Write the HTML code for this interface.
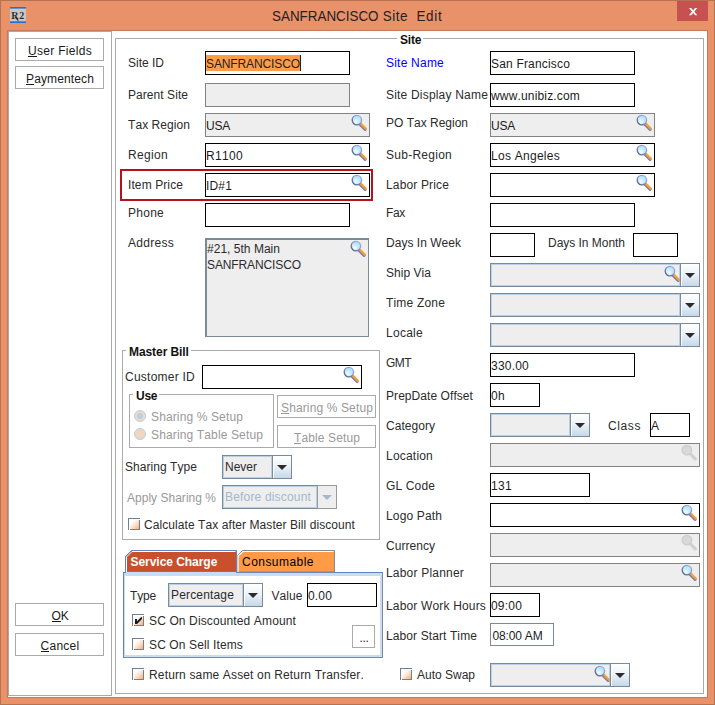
<!DOCTYPE html>
<html><head><meta charset="utf-8"><title>SANFRANCISCO Site Edit</title>
<style>
html,body{margin:0;padding:0;background:#e99168;}
body{width:715px;height:705px;position:relative;overflow:hidden;font-family:"Liberation Sans",sans-serif;font-size:12px;}
.a{position:absolute;}
.t{position:absolute;white-space:pre;font-size:12px;font-kerning:none;}
.fb{border:1px solid #000;background:#fff;box-sizing:border-box;}
.fd{border:1px solid #828282;background:#eee;box-sizing:border-box;}
.fl{border:1px solid #7a8a99;background:#fff;box-sizing:border-box;}
.cb{border:1px solid #7a8a99;background:#eee;box-sizing:border-box;box-shadow:inset 0 0 0 1px #b8cfe5;}
.cbtn{border:1px solid #7a8a99;box-sizing:border-box;background:linear-gradient(#ffffff 0%,#f0f5fa 40%,#c5d8ea 100%);box-shadow:inset 1px 1px 0 #fff;}
.cdis{background:#eee;border-color:#999;box-shadow:none;}
.btn{border:1px solid #aaa;background:#fff;box-sizing:border-box;}
.ck{width:12px;height:12px;box-sizing:border-box;border:1px solid #74859a;background:linear-gradient(135deg,#ffffff 30%,#f9d6ba 68%,#f3ab7a 100%);box-shadow:inset 1px 1px 0 #fff;}
.rd{width:12px;height:12px;border-radius:50%;box-sizing:border-box;border:1px solid #b8cfe5;}
</style></head>
<body>
<svg width="0" height="0" style="position:absolute"><defs><radialGradient id="lg" cx="0.38" cy="0.68" r="0.8"><stop offset="0" stop-color="#f4fcff"/><stop offset="0.45" stop-color="#c2ebff"/><stop offset="1" stop-color="#a9dcfb"/></radialGradient><linearGradient id="rg" x1="0" y1="1" x2="1" y2="0"><stop offset="0" stop-color="#4f567b"/><stop offset="0.5" stop-color="#828abc"/><stop offset="1" stop-color="#aeb6e2"/></linearGradient><linearGradient id="cg" x1="0" y1="0" x2="1" y2="1"><stop offset="0.22" stop-color="#ffffff"/><stop offset="0.6" stop-color="#fbdcc4"/><stop offset="1" stop-color="#f6ad7a"/></linearGradient></defs></svg>
<div class="a" style="left:0;top:0;width:715px;height:705px;background:#e99168;box-sizing:border-box;border:1px solid #b5734f"></div>
<div class="a" style="left:7px;top:30px;width:701px;height:668px;background:#c47a58"></div>
<div class="a" style="left:8px;top:31px;width:699px;height:666px;background:#fff"></div>
<svg class="a" style="left:10px;top:7px" width="16" height="16" viewBox="0 0 16 16"><rect x="0" y="0" width="16" height="16" fill="#c6c8cc"/><rect x="0" y="0" width="16" height="1.6" fill="#2a6fc6"/><rect x="0" y="14.3" width="16" height="1.7" fill="#2a6fc6"/><text x="1.2" y="11.9" font-family="Liberation Serif, serif" font-size="10" font-weight="bold" letter-spacing="0.9" fill="#1a1a1a" fill-opacity="0.92">R2</text><path d="M5.2 10 L8.3 13.7" stroke="#222" stroke-width="1.1" fill="none"/></svg>
<div class="a" id="title" style="left:271.6px;top:4px;height:24px;line-height:24px;font-size:15px;color:#222;white-space:pre;font-kerning:none;transform-origin:0 50%;transform:scaleX(0.894);word-spacing:0.6px">SANFRANCISCO <span style="letter-spacing:0.56px">Site</span>  <span style="letter-spacing:0.78px">Edit</span></div>
<div class="a" style="left:677px;top:1px;width:31px;height:20px;background:#c75050"></div>
<svg class="a" style="left:689px;top:8px" width="9" height="8" viewBox="0 0 9 8"><path d="M0 0H2.2L8.3 7.2H6.1Z" fill="#fff"/><path d="M6.1 0H8.3L2.2 7.2H0Z" fill="#fff"/></svg>
<div class="a" style="left:8px;top:31px;width:104px;height:665px;border:1px solid #aaa;box-sizing:border-box"></div>
<div class="a btn" style="left:15px;top:38px;width:89px;height:23px"></div>
<div class="t" style="left:28.0px;top:42.5px;height:16px;line-height:16px;color:#1a1a1a;letter-spacing:0.302px;">User Fields</div>
<div class="a" style="left:28.0px;top:56px;width:8.97px;height:1px;background:#1a1a1a"></div>
<div class="a btn" style="left:15px;top:66px;width:89px;height:23px"></div>
<div class="t" style="left:26.0px;top:70.5px;height:16px;line-height:16px;color:#1a1a1a;letter-spacing:0.13px;">Paymentech</div>
<div class="a" style="left:26.0px;top:84px;width:8.13px;height:1px;background:#1a1a1a"></div>
<div class="a btn" style="left:15px;top:603px;width:89px;height:23px"></div>
<div class="t" style="left:51.5px;top:607.5px;height:16px;line-height:16px;color:#1a1a1a;letter-spacing:-0.169px;">OK</div>
<div class="a" style="left:51.5px;top:621px;width:9.16px;height:1px;background:#1a1a1a"></div>
<div class="a btn" style="left:15px;top:633px;width:89px;height:23px"></div>
<div class="t" style="left:40.5px;top:637.5px;height:16px;line-height:16px;color:#1a1a1a;letter-spacing:0.274px;">Cancel</div>
<div class="a" style="left:40.5px;top:651px;width:8.94px;height:1px;background:#1a1a1a"></div>
<div class="a" style="left:115px;top:38px;width:589px;height:656px;border:1px solid #aaaaaa;box-sizing:border-box"></div>
<div class="a" style="left:397px;top:38px;width:26px;height:1px;background:#fff"></div>
<div class="t" style="left:400px;top:32.0px;height:16px;line-height:16px;color:#111;letter-spacing:-0.2px;font-weight:bold;">Site</div>
<div class="t" style="left:128px;top:55.0px;height:16px;line-height:16px;color:#2b2b2b;letter-spacing:-0.002px;">Site ID</div>
<div class="a fb" style="left:205px;top:51px;width:145px;height:24px"></div>
<div class="a" style="left:206px;top:55px;width:94px;height:16px;background:#ff9c4a"></div>
<div class="a" style="left:300px;top:55px;width:1px;height:16px;background:#222"></div>
<div class="t" style="left:206px;top:56.0px;height:16px;line-height:16px;color:#222;letter-spacing:-0.112px;">SANFRANCISCO</div>
<div class="t" style="left:128px;top:87.0px;height:16px;line-height:16px;color:#2b2b2b;letter-spacing:0.058px;">Parent Site</div>
<div class="a fd" style="left:205px;top:83px;width:145px;height:24px"></div>
<div class="t" style="left:128px;top:117.0px;height:16px;line-height:16px;color:#2b2b2b;letter-spacing:0.063px;">Tax Region</div>
<div class="a fd" style="left:205px;top:113px;width:165px;height:24px"></div>
<div class="t" style="left:206px;top:118.0px;height:16px;line-height:16px;color:#1c1c1c;letter-spacing:-0.225px;">USA</div>
<svg class="a" style="left:350px;top:114px" width="17" height="17" viewBox="0 0 17 17"><line x1="10.3" y1="10.7" x2="15.1" y2="15.5" stroke="#797cb6" stroke-width="3" stroke-linecap="round"/><line x1="11.3" y1="10.1" x2="15.9" y2="14.7" stroke="#f8a12f" stroke-width="2.3" stroke-linecap="round"/><circle cx="6.9" cy="6.1" r="4.7" fill="url(#lg)" stroke="url(#rg)" stroke-width="1.3"/></svg>
<div class="t" style="left:128px;top:147.0px;height:16px;line-height:16px;color:#2b2b2b;letter-spacing:0.329px;">Region</div>
<div class="a fb" style="left:205px;top:143px;width:165px;height:24px"></div>
<div class="t" style="left:206px;top:148.0px;height:16px;line-height:16px;color:#1c1c1c;letter-spacing:0.328px;">R1100</div>
<svg class="a" style="left:350px;top:144px" width="17" height="17" viewBox="0 0 17 17"><line x1="10.3" y1="10.7" x2="15.1" y2="15.5" stroke="#797cb6" stroke-width="3" stroke-linecap="round"/><line x1="11.3" y1="10.1" x2="15.9" y2="14.7" stroke="#f8a12f" stroke-width="2.3" stroke-linecap="round"/><circle cx="6.9" cy="6.1" r="4.7" fill="url(#lg)" stroke="url(#rg)" stroke-width="1.3"/></svg>
<div class="a" style="left:120px;top:169px;width:253px;height:32px;border:2px solid #b5121b;box-sizing:border-box"></div>
<div class="t" style="left:128px;top:177.0px;height:16px;line-height:16px;color:#2b2b2b;letter-spacing:0.099px;">Item Price</div>
<div class="a fb" style="left:205px;top:173px;width:165px;height:24px"></div>
<div class="t" style="left:206px;top:178.0px;height:16px;line-height:16px;color:#1c1c1c;letter-spacing:0.163px;">ID#1</div>
<svg class="a" style="left:350px;top:174px" width="17" height="17" viewBox="0 0 17 17"><line x1="10.3" y1="10.7" x2="15.1" y2="15.5" stroke="#797cb6" stroke-width="3" stroke-linecap="round"/><line x1="11.3" y1="10.1" x2="15.9" y2="14.7" stroke="#f8a12f" stroke-width="2.3" stroke-linecap="round"/><circle cx="6.9" cy="6.1" r="4.7" fill="url(#lg)" stroke="url(#rg)" stroke-width="1.3"/></svg>
<div class="t" style="left:128px;top:205.0px;height:16px;line-height:16px;color:#2b2b2b;letter-spacing:0.26px;">Phone</div>
<div class="a fb" style="left:205px;top:203px;width:145px;height:24px"></div>
<div class="t" style="left:128px;top:235.0px;height:16px;line-height:16px;color:#2b2b2b;letter-spacing:0.283px;">Address</div>
<div class="a" style="left:205px;top:238px;width:164px;height:99px;background:#eee;border:1px solid #7a8a99;border-left-width:2px;border-top-width:2px;box-sizing:border-box"></div>
<div class="t" style="left:207px;top:241.0px;height:16px;line-height:16px;color:#2b2b2b;letter-spacing:0.022px;">#21, 5th Main</div>
<div class="t" style="left:207px;top:257.0px;height:16px;line-height:16px;color:#2b2b2b;letter-spacing:-0.112px;">SANFRANCISCO</div>
<svg class="a" style="left:349px;top:240px" width="17" height="17" viewBox="0 0 17 17"><line x1="10.3" y1="10.7" x2="15.1" y2="15.5" stroke="#797cb6" stroke-width="3" stroke-linecap="round"/><line x1="11.3" y1="10.1" x2="15.9" y2="14.7" stroke="#f8a12f" stroke-width="2.3" stroke-linecap="round"/><circle cx="6.9" cy="6.1" r="4.7" fill="url(#lg)" stroke="url(#rg)" stroke-width="1.3"/></svg>
<div class="a" style="left:122px;top:350px;width:258px;height:190px;border:1px solid #aaaaaa;box-sizing:border-box"></div>
<div class="a" style="left:126px;top:350px;width:65px;height:1px;background:#fff"></div>
<div class="t" style="left:129px;top:344.0px;height:16px;line-height:16px;color:#111;letter-spacing:-0.073px;font-weight:bold;">Master Bill</div>
<div class="t" style="left:125px;top:369.0px;height:16px;line-height:16px;color:#2b2b2b;letter-spacing:0.241px;">Customer ID</div>
<div class="a fb" style="left:202px;top:365px;width:160px;height:24px"></div>
<svg class="a" style="left:342px;top:366px" width="17" height="17" viewBox="0 0 17 17"><line x1="10.3" y1="10.7" x2="15.1" y2="15.5" stroke="#797cb6" stroke-width="3" stroke-linecap="round"/><line x1="11.3" y1="10.1" x2="15.9" y2="14.7" stroke="#f8a12f" stroke-width="2.3" stroke-linecap="round"/><circle cx="6.9" cy="6.1" r="4.7" fill="url(#lg)" stroke="url(#rg)" stroke-width="1.3"/></svg>
<div class="a" style="left:129px;top:394px;width:145px;height:54px;border:1px solid #aaaaaa;box-sizing:border-box"></div>
<div class="a" style="left:133px;top:394px;width:26px;height:1px;background:#fff"></div>
<div class="t" style="left:136px;top:388.0px;height:16px;line-height:16px;color:#111;letter-spacing:-0.267px;font-weight:bold;">Use</div>
<div class="a rd" style="left:134px;top:410px;background:radial-gradient(circle,#b8cfe5 0,#b8cfe5 2.8px,#f3d7c3 3.4px)"></div>
<div class="a rd" style="left:134px;top:428px;background:#f0d5c0"></div>
<div class="t" style="left:151px;top:409.0px;height:16px;line-height:16px;color:#999999;letter-spacing:0.129px;">Sharing % Setup</div>
<div class="t" style="left:151px;top:427.0px;height:16px;line-height:16px;color:#999999;letter-spacing:0.137px;">Sharing Table Setup</div>
<div class="a btn" style="left:277px;top:395px;width:99px;height:23px"></div>
<div class="t" style="left:281.0px;top:399.5px;height:16px;line-height:16px;color:#999999;letter-spacing:0.129px;">Sharing % Setup</div>
<div class="a" style="left:281.0px;top:413px;width:8.13px;height:1px;background:#999999"></div>
<div class="a btn" style="left:277px;top:425px;width:99px;height:23px"></div>
<div class="t" style="left:294.0px;top:429.5px;height:16px;line-height:16px;color:#999999;letter-spacing:0.117px;">Table Setup</div>
<div class="a" style="left:294.0px;top:443px;width:7.45px;height:1px;background:#999999"></div>
<div class="t" style="left:125px;top:459.0px;height:16px;line-height:16px;color:#2b2b2b;letter-spacing:0.052px;">Sharing Type</div>
<div class="a cb" style="left:222px;top:455px;width:51px;height:24px"></div>
<div class="a cbtn" style="left:272px;top:455px;width:20px;height:24px"><svg width="10" height="5" viewBox="0 0 10 5" style="position:absolute;left:4px;top:9px"><path d="M0 0H10L5 5Z" fill="#2b2b2b"/></svg></div>
<div class="t" style="left:225px;top:459.0px;height:16px;line-height:16px;color:#2b2b2b;letter-spacing:-0.002px;">Never</div>
<div class="t" style="left:127px;top:490.0px;height:16px;line-height:16px;color:#999999;letter-spacing:0.019px;">Apply Sharing %</div>
<div class="a cb" style="left:222px;top:485px;width:96px;height:24px"></div>
<div class="a cbtn cdis" style="left:317px;top:485px;width:20px;height:24px"><svg width="10" height="5" viewBox="0 0 10 5" style="position:absolute;left:4px;top:9px"><path d="M0 0H10L5 5Z" fill="#a3b8cc"/></svg></div>
<div class="t" style="left:225px;top:489.0px;height:16px;line-height:16px;color:#a3b8cc;letter-spacing:0.174px;">Before discount</div>
<svg class="a" style="left:128px;top:518px" width="12" height="12" viewBox="0 0 12 12"><g shape-rendering="crispEdges"><rect x="0" y="0" width="12" height="12" fill="#fff"/><rect x="2" y="2" width="9" height="9" fill="url(#cg)"/><path d="M0 0.5H12M0.5 0V12M11.5 2V12M2 11.5H12" stroke="#6f8197" stroke-width="1" fill="none"/></g></svg>
<div class="t" style="left:144px;top:517.0px;height:16px;line-height:16px;color:#2b2b2b;letter-spacing:0.073px;">Calculate Tax after Master Bill discount</div>
<svg class="a" style="left:123px;top:550px" width="261" height="109" viewBox="0 0 261 109"><rect x="0" y="22" width="260" height="86" fill="#7a8a99"/><rect x="0" y="22" width="259" height="85" fill="#6382bf"/><rect x="1" y="23" width="258" height="84" fill="#c8ddf2"/><rect x="0" y="22" width="1" height="86" fill="#6382bf"/><rect x="259" y="23" width="1" height="85" fill="#7a8a99"/><rect x="1" y="107" width="259" height="1" fill="#7a8a99"/><rect x="2" y="26" width="255" height="79" fill="#fff"/><path d="M114.5 22 V5.5 L119.5 0.5 H211.5 V22 Z" fill="#ff9a46" stroke="#7a8a99"/><path d="M115 22 V6 L120 1.5 H210.5" fill="none" stroke="#fff" stroke-width="1.2"/><path d="M2.5 23 V6.5 L8.5 0.5 H113.5 V22 H3 Z" fill="#c8502c" stroke="#6382bf"/><path d="M3.5 23 V7 L9 1.5 H112.5" fill="none" stroke="#fff"/><rect x="3" y="22" width="110" height="1.5" fill="#c8ddf2"/></svg>
<div class="t" style="left:130.5px;top:554.0px;height:16px;line-height:16px;color:#fff;letter-spacing:-0.043px;font-weight:bold;">Service Charge</div>
<div class="t" style="left:242px;top:554.0px;height:16px;line-height:16px;color:#000;letter-spacing:0.463px;">Consumable</div>
<div class="t" style="left:130px;top:588.0px;height:16px;line-height:16px;color:#2b2b2b;letter-spacing:-0.169px;">Type</div>
<div class="a cb" style="left:168px;top:583px;width:76px;height:24px"></div>
<div class="a cbtn" style="left:243px;top:583px;width:20px;height:24px"><svg width="10" height="5" viewBox="0 0 10 5" style="position:absolute;left:4px;top:9px"><path d="M0 0H10L5 5Z" fill="#2b2b2b"/></svg></div>
<div class="t" style="left:171px;top:587.0px;height:16px;line-height:16px;color:#2b2b2b;letter-spacing:0.162px;">Percentage</div>
<div class="t" style="left:271.5px;top:588.0px;height:16px;line-height:16px;color:#2b2b2b;letter-spacing:0.062px;">Value</div>
<div class="a fb" style="left:307px;top:583px;width:70px;height:24px"></div>
<div class="t" style="left:308px;top:588.0px;height:16px;line-height:16px;color:#1c1c1c;letter-spacing:0.161px;">0.00</div>
<svg class="a" style="left:132px;top:614px" width="12" height="12" viewBox="0 0 12 12"><g shape-rendering="crispEdges"><rect x="0" y="0" width="12" height="12" fill="#fff"/><rect x="2" y="2" width="9" height="9" fill="url(#cg)"/><path d="M0 0.5H12M0.5 0V12M11.5 2V12M2 11.5H12" stroke="#6f8197" stroke-width="1" fill="none"/></g><path d="M3 5H5V7.2L9 3.2H10V5L5.6 9.4L5 10H3Z" fill="#1a1a1a"/></svg>
<div class="t" style="left:149px;top:613.0px;height:16px;line-height:16px;color:#2b2b2b;letter-spacing:0.127px;">SC On Discounted Amount</div>
<svg class="a" style="left:132px;top:638px" width="12" height="12" viewBox="0 0 12 12"><g shape-rendering="crispEdges"><rect x="0" y="0" width="12" height="12" fill="#fff"/><rect x="2" y="2" width="9" height="9" fill="url(#cg)"/><path d="M0 0.5H12M0.5 0V12M11.5 2V12M2 11.5H12" stroke="#6f8197" stroke-width="1" fill="none"/></g></svg>
<div class="t" style="left:149px;top:637.0px;height:16px;line-height:16px;color:#2b2b2b;letter-spacing:0.123px;">SC On Sell Items</div>
<div class="a btn" style="left:352px;top:625px;width:23px;height:23px"></div>
<div class="t" style="left:359.5px;top:629.5px;height:16px;line-height:16px;color:#1a1a1a;letter-spacing:-0.334px;">...</div>
<svg class="a" style="left:132px;top:668px" width="12" height="12" viewBox="0 0 12 12"><g shape-rendering="crispEdges"><rect x="0" y="0" width="12" height="12" fill="#fff"/><rect x="2" y="2" width="9" height="9" fill="url(#cg)"/><path d="M0 0.5H12M0.5 0V12M11.5 2V12M2 11.5H12" stroke="#6f8197" stroke-width="1" fill="none"/></g></svg>
<div class="t" style="left:149px;top:667.0px;height:16px;line-height:16px;color:#2b2b2b;letter-spacing:0.151px;">Return same Asset on Return Transfer.</div>
<div class="t" style="left:386px;top:55.0px;height:16px;line-height:16px;color:#0000ff;letter-spacing:0.22px;">Site Name</div>
<div class="a fb" style="left:490px;top:51px;width:145px;height:24px"></div>
<div class="t" style="left:491px;top:56.0px;height:16px;line-height:16px;color:#1c1c1c;letter-spacing:0.177px;">San Francisco</div>
<div class="t" style="left:386px;top:87.0px;height:16px;line-height:16px;color:#2b2b2b;letter-spacing:0.194px;">Site Display Name</div>
<div class="a fb" style="left:490px;top:83px;width:145px;height:24px"></div>
<div class="t" style="left:491px;top:88.0px;height:16px;line-height:16px;color:#1c1c1c;letter-spacing:0.165px;">www.unibiz.com</div>
<div class="t" style="left:386px;top:115.0px;height:16px;line-height:16px;color:#2b2b2b;letter-spacing:-0.003px;">PO Tax Region</div>
<div class="a fd" style="left:490px;top:113px;width:165px;height:24px"></div>
<div class="t" style="left:491px;top:118.0px;height:16px;line-height:16px;color:#1c1c1c;letter-spacing:-0.225px;">USA</div>
<svg class="a" style="left:635px;top:114px" width="17" height="17" viewBox="0 0 17 17"><line x1="10.3" y1="10.7" x2="15.1" y2="15.5" stroke="#797cb6" stroke-width="3" stroke-linecap="round"/><line x1="11.3" y1="10.1" x2="15.9" y2="14.7" stroke="#f8a12f" stroke-width="2.3" stroke-linecap="round"/><circle cx="6.9" cy="6.1" r="4.7" fill="url(#lg)" stroke="url(#rg)" stroke-width="1.3"/></svg>
<div class="t" style="left:386px;top:147.0px;height:16px;line-height:16px;color:#2b2b2b;letter-spacing:0.263px;">Sub-Region</div>
<div class="a fb" style="left:490px;top:143px;width:165px;height:24px"></div>
<div class="t" style="left:491px;top:148.0px;height:16px;line-height:16px;color:#1c1c1c;letter-spacing:0.268px;">Los Angeles</div>
<svg class="a" style="left:635px;top:144px" width="17" height="17" viewBox="0 0 17 17"><line x1="10.3" y1="10.7" x2="15.1" y2="15.5" stroke="#797cb6" stroke-width="3" stroke-linecap="round"/><line x1="11.3" y1="10.1" x2="15.9" y2="14.7" stroke="#f8a12f" stroke-width="2.3" stroke-linecap="round"/><circle cx="6.9" cy="6.1" r="4.7" fill="url(#lg)" stroke="url(#rg)" stroke-width="1.3"/></svg>
<div class="t" style="left:386px;top:177.0px;height:16px;line-height:16px;color:#2b2b2b;letter-spacing:0.149px;">Labor Price</div>
<div class="a fb" style="left:490px;top:173px;width:165px;height:24px"></div>
<svg class="a" style="left:635px;top:174px" width="17" height="17" viewBox="0 0 17 17"><line x1="10.3" y1="10.7" x2="15.1" y2="15.5" stroke="#797cb6" stroke-width="3" stroke-linecap="round"/><line x1="11.3" y1="10.1" x2="15.9" y2="14.7" stroke="#f8a12f" stroke-width="2.3" stroke-linecap="round"/><circle cx="6.9" cy="6.1" r="4.7" fill="url(#lg)" stroke="url(#rg)" stroke-width="1.3"/></svg>
<div class="t" style="left:386px;top:205.0px;height:16px;line-height:16px;color:#2b2b2b;letter-spacing:-0.335px;">Fax</div>
<div class="a fb" style="left:490px;top:203px;width:145px;height:24px"></div>
<div class="t" style="left:386px;top:235.0px;height:16px;line-height:16px;color:#2b2b2b;letter-spacing:0.026px;">Days In Week</div>
<div class="a fb" style="left:490px;top:233px;width:45px;height:24px"></div>
<div class="t" style="left:548px;top:235.0px;height:16px;line-height:16px;color:#2b2b2b;letter-spacing:-0.028px;">Days In Month</div>
<div class="a fb" style="left:633px;top:233px;width:45px;height:24px"></div>
<div class="t" style="left:386px;top:265.0px;height:16px;line-height:16px;color:#2b2b2b;letter-spacing:0.038px;">Ship Via</div>
<div class="a cb" style="left:490px;top:263px;width:191px;height:24px"></div>
<div class="a cbtn" style="left:680px;top:263px;width:20px;height:24px"><svg width="10" height="5" viewBox="0 0 10 5" style="position:absolute;left:4px;top:9px"><path d="M0 0H10L5 5Z" fill="#2b2b2b"/></svg></div>
<svg class="a" style="left:663px;top:265px" width="17" height="17" viewBox="0 0 17 17"><line x1="10.3" y1="10.7" x2="15.1" y2="15.5" stroke="#797cb6" stroke-width="3" stroke-linecap="round"/><line x1="11.3" y1="10.1" x2="15.9" y2="14.7" stroke="#f8a12f" stroke-width="2.3" stroke-linecap="round"/><circle cx="6.9" cy="6.1" r="4.7" fill="url(#lg)" stroke="url(#rg)" stroke-width="1.3"/></svg>
<div class="t" style="left:386px;top:295.0px;height:16px;line-height:16px;color:#2b2b2b;letter-spacing:0.183px;">Time Zone</div>
<div class="a cb" style="left:490px;top:293px;width:191px;height:24px"></div>
<div class="a cbtn" style="left:680px;top:293px;width:20px;height:24px"><svg width="10" height="5" viewBox="0 0 10 5" style="position:absolute;left:4px;top:9px"><path d="M0 0H10L5 5Z" fill="#2b2b2b"/></svg></div>
<div class="t" style="left:386px;top:325.0px;height:16px;line-height:16px;color:#2b2b2b;letter-spacing:0.273px;">Locale</div>
<div class="a cb" style="left:490px;top:323px;width:191px;height:24px"></div>
<div class="a cbtn" style="left:680px;top:323px;width:20px;height:24px"><svg width="10" height="5" viewBox="0 0 10 5" style="position:absolute;left:4px;top:9px"><path d="M0 0H10L5 5Z" fill="#2b2b2b"/></svg></div>
<div class="t" style="left:386px;top:355.0px;height:16px;line-height:16px;color:#2b2b2b;letter-spacing:-0.553px;">GMT</div>
<div class="a fb" style="left:490px;top:353px;width:145px;height:24px"></div>
<div class="t" style="left:491px;top:358.0px;height:16px;line-height:16px;color:#1c1c1c;letter-spacing:0.216px;">330.00</div>
<div class="t" style="left:386px;top:388.0px;height:16px;line-height:16px;color:#2b2b2b;letter-spacing:0.064px;">PrepDate Offset</div>
<div class="a fb" style="left:490px;top:383px;width:50px;height:24px"></div>
<div class="t" style="left:491px;top:388.0px;height:16px;line-height:16px;color:#1c1c1c;letter-spacing:0.326px;">0h</div>
<div class="t" style="left:386px;top:418.0px;height:16px;line-height:16px;color:#2b2b2b;letter-spacing:0.039px;">Category</div>
<div class="a cb" style="left:490px;top:413px;width:81px;height:24px"></div>
<div class="a cbtn" style="left:570px;top:413px;width:20px;height:24px"><svg width="10" height="5" viewBox="0 0 10 5" style="position:absolute;left:4px;top:9px"><path d="M0 0H10L5 5Z" fill="#2b2b2b"/></svg></div>
<div class="t" style="left:608px;top:418.0px;height:16px;line-height:16px;color:#2b2b2b;letter-spacing:0.599px;">Class</div>
<div class="a fb" style="left:650px;top:413px;width:40px;height:24px"></div>
<div class="t" style="left:651px;top:418.0px;height:16px;line-height:16px;color:#1c1c1c;letter-spacing:-1.004px;">A</div>
<div class="t" style="left:386px;top:448.0px;height:16px;line-height:16px;color:#2b2b2b;letter-spacing:0.204px;">Location</div>
<div class="a fd" style="left:490px;top:443px;width:210px;height:24px"></div>
<svg class="a" style="left:680px;top:444px" width="17" height="17" viewBox="0 0 17 17"><line x1="10.6" y1="10.2" x2="15.2" y2="14.8" stroke="#d0d0d0" stroke-width="3.3" stroke-linecap="round"/><circle cx="6.9" cy="6.1" r="4.7" fill="#d9d9d9" stroke="#cecece" stroke-width="1.5"/></svg>
<div class="t" style="left:386px;top:478.0px;height:16px;line-height:16px;color:#2b2b2b;letter-spacing:0.139px;">GL Code</div>
<div class="a fb" style="left:490px;top:473px;width:100px;height:24px"></div>
<div class="t" style="left:491px;top:478.0px;height:16px;line-height:16px;color:#1c1c1c;letter-spacing:0.326px;">131</div>
<div class="t" style="left:386px;top:508.0px;height:16px;line-height:16px;color:#2b2b2b;letter-spacing:0.143px;">Logo Path</div>
<div class="a fb" style="left:490px;top:503px;width:210px;height:24px"></div>
<svg class="a" style="left:680px;top:504px" width="17" height="17" viewBox="0 0 17 17"><line x1="10.3" y1="10.7" x2="15.1" y2="15.5" stroke="#797cb6" stroke-width="3" stroke-linecap="round"/><line x1="11.3" y1="10.1" x2="15.9" y2="14.7" stroke="#f8a12f" stroke-width="2.3" stroke-linecap="round"/><circle cx="6.9" cy="6.1" r="4.7" fill="url(#lg)" stroke="url(#rg)" stroke-width="1.3"/></svg>
<div class="t" style="left:386px;top:538.0px;height:16px;line-height:16px;color:#2b2b2b;letter-spacing:0.04px;">Currency</div>
<div class="a fd" style="left:490px;top:533px;width:210px;height:24px"></div>
<svg class="a" style="left:680px;top:534px" width="17" height="17" viewBox="0 0 17 17"><line x1="10.6" y1="10.2" x2="15.2" y2="14.8" stroke="#d0d0d0" stroke-width="3.3" stroke-linecap="round"/><circle cx="6.9" cy="6.1" r="4.7" fill="#d9d9d9" stroke="#cecece" stroke-width="1.5"/></svg>
<div class="t" style="left:386px;top:565.0px;height:16px;line-height:16px;color:#2b2b2b;letter-spacing:0.201px;">Labor Planner</div>
<div class="a fd" style="left:490px;top:563px;width:210px;height:24px"></div>
<svg class="a" style="left:680px;top:564px" width="17" height="17" viewBox="0 0 17 17"><line x1="10.3" y1="10.7" x2="15.1" y2="15.5" stroke="#797cb6" stroke-width="3" stroke-linecap="round"/><line x1="11.3" y1="10.1" x2="15.9" y2="14.7" stroke="#f8a12f" stroke-width="2.3" stroke-linecap="round"/><circle cx="6.9" cy="6.1" r="4.7" fill="url(#lg)" stroke="url(#rg)" stroke-width="1.3"/></svg>
<div class="t" style="left:386px;top:598.0px;height:16px;line-height:16px;color:#2b2b2b;letter-spacing:0.165px;">Labor Work Hours</div>
<div class="a fb" style="left:490px;top:593px;width:50px;height:24px"></div>
<div class="t" style="left:491px;top:598.0px;height:16px;line-height:16px;color:#1c1c1c;letter-spacing:0.194px;">09:00</div>
<div class="t" style="left:386px;top:628.0px;height:16px;line-height:16px;color:#2b2b2b;letter-spacing:0.102px;">Labor Start Time</div>
<div class="a fl" style="left:490px;top:623px;width:64px;height:23px"></div>
<div class="t" style="left:492.5px;top:627.5px;height:16px;line-height:16px;color:#1c1c1c;letter-spacing:-0.17px;">08:00 AM</div>
<svg class="a" style="left:400px;top:668px" width="12" height="12" viewBox="0 0 12 12"><g shape-rendering="crispEdges"><rect x="0" y="0" width="12" height="12" fill="#fff"/><rect x="2" y="2" width="9" height="9" fill="url(#cg)"/><path d="M0 0.5H12M0.5 0V12M11.5 2V12M2 11.5H12" stroke="#6f8197" stroke-width="1" fill="none"/></g></svg>
<div class="t" style="left:417px;top:667.0px;height:16px;line-height:16px;color:#2b2b2b;letter-spacing:-0.004px;">Auto Swap</div>
<div class="a cb" style="left:490px;top:663px;width:121px;height:24px"></div>
<div class="a cbtn" style="left:610px;top:663px;width:20px;height:24px"><svg width="10" height="5" viewBox="0 0 10 5" style="position:absolute;left:4px;top:9px"><path d="M0 0H10L5 5Z" fill="#2b2b2b"/></svg></div>
<svg class="a" style="left:593px;top:665px" width="17" height="17" viewBox="0 0 17 17"><line x1="10.3" y1="10.7" x2="15.1" y2="15.5" stroke="#797cb6" stroke-width="3" stroke-linecap="round"/><line x1="11.3" y1="10.1" x2="15.9" y2="14.7" stroke="#f8a12f" stroke-width="2.3" stroke-linecap="round"/><circle cx="6.9" cy="6.1" r="4.7" fill="url(#lg)" stroke="url(#rg)" stroke-width="1.3"/></svg>
</body></html>
